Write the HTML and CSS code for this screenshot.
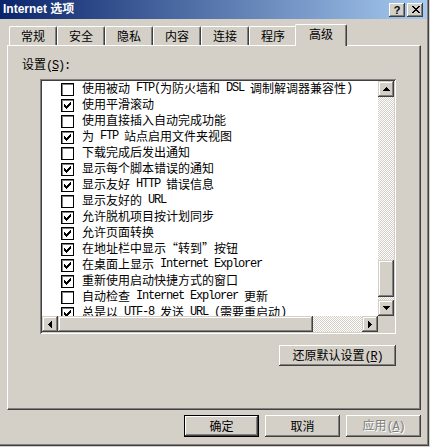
FILE: index.html
```html
<!DOCTYPE html>
<html lang="zh-CN">
<head>
    <meta charset="UTF-8">
    <meta name="viewport" content="width=device-width, initial-scale=1.0">
    <title>Internet 选项</title>
    <link rel="stylesheet" href="styles.css">
</head>
<body>
    <svg class="defs" width="0" height="0">
        <symbol id="chk" viewBox="0 0 13 13">
            <path d="M3 5h1v1h1v1h1v-1h1v-1h1v-1h1v-1h1v3h-1v1h-1v1h-1v1h-1v1h-1v-1h-1v-1h-1z"/>
        </symbol>
    </svg>
    <div class="window">
        <div class="titlebar">
            <span class="title">Internet 选项</span>
            <span class="cap-btn help">?</span>
            <span class="cap-btn close">
                <svg width="8" height="7" viewBox="0 0 8 7"><path d="M0 0h2v1h1v1h2v-1h1v-1h2v1h-1v1h-1v1h-1v1h1v1h1v1h1v1h-2v-1h-1v-1h-2v1h-1v1h-2v-1h1v-1h1v-1h1v-1h-1v-1h-1v-1h-1z"/></svg>
            </span>
        </div>

        <div class="tabs">
            <div class="tab">常规</div>
            <div class="tab">安全</div>
            <div class="tab">隐私</div>
            <div class="tab">内容</div>
            <div class="tab">连接</div>
            <div class="tab">程序</div>
            <div class="tab active">高级</div>
        </div>

        <div class="panel">
            <div class="label">设置<span class="en">(<u>S</u>):</span></div>
            <div class="settings">
                <div class="listbox">
                    <div class="rows">
                        <div class="row"><span class="box"></span>使用被动<span class="en"> FTP(</span>为防火墙和<span class="en"> DSL </span>调制解调器兼容性<span class="en">)</span></div>
                        <div class="row"><span class="box"><svg><use href="#chk"/></svg></span>使用平滑滚动</div>
                        <div class="row"><span class="box"></span>使用直接插入自动完成功能</div>
                        <div class="row"><span class="box"><svg><use href="#chk"/></svg></span>为<span class="en"> FTP </span>站点启用文件夹视图</div>
                        <div class="row"><span class="box"></span>下载完成后发出通知</div>
                        <div class="row"><span class="box"><svg><use href="#chk"/></svg></span>显示每个脚本错误的通知</div>
                        <div class="row"><span class="box"><svg><use href="#chk"/></svg></span>显示友好<span class="en"> HTTP </span>错误信息</div>
                        <div class="row"><span class="box"></span>显示友好的<span class="en"> URL</span></div>
                        <div class="row"><span class="box"><svg><use href="#chk"/></svg></span>允许脱机项目按计划同步</div>
                        <div class="row"><span class="box"><svg><use href="#chk"/></svg></span>允许页面转换</div>
                        <div class="row"><span class="box"><svg><use href="#chk"/></svg></span>在地址栏中显示“转到”按钮</div>
                        <div class="row"><span class="box"><svg><use href="#chk"/></svg></span>在桌面上显示<span class="en"> Internet Explorer</span></div>
                        <div class="row"><span class="box"><svg><use href="#chk"/></svg></span>重新使用启动快捷方式的窗口</div>
                        <div class="row"><span class="box"></span>自动检查<span class="en"> Internet Explorer </span>更新</div>
                        <div class="row"><span class="box"><svg><use href="#chk"/></svg></span>总是以<span class="en"> UTF-8 </span>发送<span class="en"> URL (</span>需要重启动<span class="en">)</span></div>
                    </div>
                    <div class="vscroll">
                        <span class="arrow-btn"><svg width="7" height="4"><path d="M3 0h1v1h1v1h1v1h1v1H0V3h1V2h1V1h1z"/></svg></span>
                        <div class="track v">
                            <div class="thumb" style="margin-top: 163px; height: 37px"></div>
                        </div>
                        <span class="arrow-btn"><svg width="7" height="4"><path d="M0 0h7v1H6v1H5v1H4v1H3V3H2V2H1V1H0z"/></svg></span>
                    </div>
                    <div class="hscroll">
                        <span class="arrow-btn"><svg width="4" height="7"><path d="M3 0h1v7H3V6H2V5H1V4H0V3h1V2h1V1h1z"/></svg></span>
                        <div class="track h">
                            <div class="thumb" style="width: 255px"></div>
                        </div>
                        <span class="arrow-btn"><svg width="4" height="7"><path d="M0 0h1v1h1v1h1v1h1v1H3v1H2v1H1v1H0z"/></svg></span>
                    </div>
                    <div class="corner"></div>
                </div>
                <button class="btn restore">还原默认设置<span class="en">(<u>R</u>)</span></button>
            </div>
        </div>

        <div class="footer">
            <button class="btn default">确定</button>
            <button class="btn">取消</button>
            <button class="btn" disabled>应用<span class="en">(<u>A</u>)</span></button>
        </div>
    </div>
</body>
</html>
```

FILE: styles.css
```css
body {
    margin: 0;
    background: #d4d0c8;
    font: 12px/16px "Noto Sans CJK SC", sans-serif;
    color: #000;
}
.defs {
    display: block;
    width: 0;
    height: 0;
    overflow: hidden;
}
.en {
    font-family: "Liberation Mono", monospace;
    font-size: 12px;
    letter-spacing: -1.2px;
    white-space: pre;
}
.window {
    box-sizing: border-box;
    width: 429px;
    height: 446px;
    background: #d4d0c8;
    border-right: 1px solid #404040;
    border-bottom: 1px solid #404040;
    box-shadow: inset -1px -1px #808080;
}
.titlebar {
    display: flex;
    align-items: center;
    height: 19px;
    margin-right: 1px;
    padding: 0 4px 0 3px;
    background: linear-gradient(to right, #0a246a, #a6caf0);
}
.title {
    flex: 1;
    color: #fff;
    font: bold 12px/19px "Liberation Sans", "Noto Sans CJK SC", sans-serif;
}
.cap-btn {
    display: flex;
    align-items: center;
    justify-content: center;
    width: 16px;
    height: 14px;
    margin-left: 2px;
    background: #d4d0c8;
    box-shadow: inset -1px -1px #404040, inset 1px 1px #fff, inset -2px -2px #808080;
}
.help {
    font: bold 11px/14px "Liberation Sans", sans-serif;
}
.close svg {
    display: block;
    margin-left: 1px;
}

/* tabs */
.tabs {
    position: relative;
    z-index: 1;
    display: flex;
    align-items: flex-end;
    height: 21px;
    margin: 5px 0 0 9px;
}
.tab {
    box-sizing: border-box;
    width: 48px;
    height: 19px;
    border-top: 1px solid #fff;
    border-left: 1px solid #fff;
    border-right: 1px solid #404040;
    border-radius: 2px 2px 0 0;
    box-shadow: inset -1px 0 #808080;
    text-align: center;
    line-height: 18px;
}
.tab.active {
    width: 52px;
    height: 22px;
    margin: 0 -2px -1px;
    padding-bottom: 2px;
    background: #d4d0c8;
    line-height: 18px;
}

/* page */
.panel {
    box-sizing: border-box;
    width: 414px;
    height: 365px;
    margin-left: 7px;
    padding: 10px 0 0 14px;
    border-top: 1px solid #fff;
    border-left: 1px solid #fff;
    border-right: 1px solid #404040;
    border-bottom: 1px solid #404040;
    box-shadow: inset -1px -1px #808080;
}
.settings {
    display: flex;
    flex-direction: column;
    width: 356px;
    margin: 5px 0 0 18px;
}
.listbox {
    box-sizing: border-box;
    display: grid;
    grid-template-columns: 1fr 16px;
    grid-template-rows: 1fr 16px;
    height: 255px;
    padding: 2px;
    background: #fff;
    box-shadow: inset 1px 1px #808080, inset -1px -1px #fff, inset 2px 2px #404040, inset -2px -2px #d4d0c8;
}
.rows {
    overflow: hidden;
    margin-top: -1px;
}
.row {
    display: flex;
    align-items: flex-start;
    height: 16px;
    padding-left: 19px;
    white-space: nowrap;
}
.box {
    box-sizing: border-box;
    flex: none;
    width: 13px;
    height: 13px;
    margin: 3px 8px 0 0;
    background: #fff;
    border: 1px solid #000;
    box-shadow: inset 1px 1px #808080;
}
.box svg {
    display: block;
    width: 13px;
    height: 13px;
    margin: -1px;
    shape-rendering: crispEdges;
}

/* scrollbars */
.vscroll {
    display: flex;
    flex-direction: column;
}
.hscroll {
    display: flex;
}
.arrow-btn {
    display: flex;
    flex: none;
    align-items: center;
    justify-content: center;
    width: 16px;
    height: 16px;
    background: #d4d0c8;
    box-shadow: inset -1px -1px #404040, inset 1px 1px #d4d0c8, inset -2px -2px #808080, inset 2px 2px #fff;
}
.arrow-btn svg {
    display: block;
    shape-rendering: crispEdges;
}
.track {
    flex: 1;
    display: flex;
    background: repeating-conic-gradient(#fff 0 25%, #d4d0c8 0 50%) 0 0 / 2px 2px;
}
.track.v {
    flex-direction: column;
}
.thumb {
    flex: none;
    width: 16px;
    height: 16px;
    background: #d4d0c8;
    box-shadow: inset -1px -1px #404040, inset 1px 1px #d4d0c8, inset -2px -2px #808080, inset 2px 2px #fff;
}
.corner {
    background: #d4d0c8;
}

/* buttons */
.btn {
    box-sizing: border-box;
    width: 75px;
    height: 22px;
    padding: 0;
    border: none;
    background: #d4d0c8;
    font: 12px/16px "Noto Sans CJK SC", sans-serif;
    color: #000;
    box-shadow: inset -1px -1px #404040, inset 1px 1px #fff, inset -2px -2px #808080;
}
.btn.default {
    box-shadow: inset 0 0 0 1px #000, inset -2px -2px #404040, inset 2px 2px #fff, inset -3px -3px #808080;
}
.btn:disabled {
    color: #808080;
    text-shadow: 1px 1px #fff;
}
.restore {
    align-self: flex-end;
    width: 117px;
    height: 21px;
    margin-top: 11px;
}
.footer {
    display: flex;
    justify-content: flex-end;
    gap: 6px;
    margin-top: 5px;
    padding-right: 7px;
}
```
